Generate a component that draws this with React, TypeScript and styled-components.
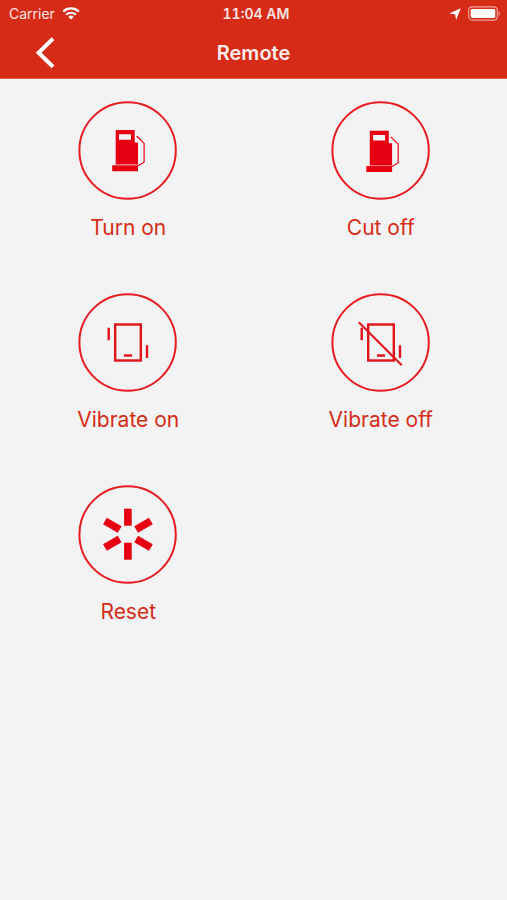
import React from "react";
import styled, { createGlobalStyle } from "styled-components";

const RED = "#d52b17";
const ICON_RED = "#e60012";

const GlobalStyle = createGlobalStyle`
  *, *::before, *::after { box-sizing: border-box; }
  body {
    margin: 0;
    background: #f3f3f3;
    font-family: Inter, "Liberation Sans", sans-serif;
  }
`;

const Screen = styled.div`
  min-height: 100vh;
  background: #f3f3f3;
`;

const Header = styled.header`
  background: ${RED};
  color: #ffffff;
  border-bottom: 1px solid #dc5a4b;
`;

const StatusBar = styled.div`
  display: grid;
  grid-template-columns: 1fr auto 1fr;
  align-items: center;
  height: 27px;
  padding: 0 6px 0 9px;
  font-size: 14px;
  line-height: 20px;
  color: #fbe4e1;
`;

const StatusGroup = styled.div<{ $end?: boolean }>`
  display: flex;
  align-items: center;
  justify-content: ${(p) => (p.$end ? "flex-end" : "flex-start")};
  gap: 7px;
`;

const Time = styled.time`
  padding-left: 2px;
  font-weight: 600;
  font-variant-numeric: tabular-nums;
`;

const NavBar = styled.div`
  display: grid;
  grid-template-columns: 1fr auto 1fr;
  align-items: center;
  height: 51px;
  padding: 0 28px;
`;

const BackButton = styled.button`
  display: flex;
  justify-self: start;
  border: 0;
  padding: 0;
  background: none;
  color: inherit;
  cursor: pointer;
`;

const Title = styled.h1`
  margin: 0;
  font-size: 20px;
  line-height: 28px;
  font-weight: 600;
  color: #fdeeec;
`;

const Actions = styled.main`
  display: grid;
  grid-template-columns: 1fr 1fr;
  row-gap: 50px;
  padding: 22px 0 22px 2px;
`;

const ActionButton = styled.button`
  display: flex;
  flex-direction: column;
  align-items: center;
  justify-self: center;
  gap: 12px;
  border: 0;
  padding: 0;
  background: none;
  color: ${RED};
  font-family: inherit;
  font-size: 21px;
  line-height: 30px;
  cursor: pointer;
`;

const Ring = ({ children }: { children: React.ReactNode }) => (
  <svg width="100" height="100" viewBox="0 0 100 100" fill="none" aria-hidden="true">
    <circle cx="49.6" cy="49.5" r="48.2" stroke="#e81c20" strokeWidth="2" />
    {children}
  </svg>
);

const Pump = () => (
  <>
    <path
      fill={ICON_RED}
      fillRule="evenodd"
      d="M37.7 29h19v12.4H60v22H37.7ZM41 33.3v5.4h12v-5.4ZM34.2 64.2H60v6.1H34.2Z"
    />
    <path d="M37.7 63.8H60" stroke="#f06a70" strokeWidth="1" />
    <path d="M58.7 35l7.4 7.4v18.8L60 64.8" stroke={ICON_RED} strokeWidth="1.2" />
  </>
);

const Phone = () => (
  <g stroke="#e0121a" strokeWidth="2.4">
    <rect x="37.2" y="31.5" width="25.6" height="36" />
    <path d="M46 62.5h8M30.7 34.7v12.6M69 52.3V65" />
  </g>
);

const TurnOnIcon = () => (
  <Ring>
    <Pump />
  </Ring>
);

const CutOffIcon = () => (
  <Ring>
    <g transform="translate(1.1 .8)">
      <Pump />
    </g>
  </Ring>
);

const VibrateOnIcon = () => (
  <Ring>
    <Phone />
  </Ring>
);

const VibrateOffIcon = () => (
  <Ring>
    <Phone />
    <path d="M27.8 29.3l43 43" stroke="#e0121a" strokeWidth="2" />
  </Ring>
);

const ResetIcon = () => (
  <Ring>
    <g fill={ICON_RED}>
      {[0, 60, 120, 180, 240, 300].map((angle) => (
        <rect
          key={angle}
          x="46.1"
          y={angle % 180 === 0 ? 23.7 : 22.7}
          width="7.6"
          height="17"
          transform={`rotate(${angle} 49.9 49.2)`}
        />
      ))}
    </g>
  </Ring>
);

const actions = [
  { label: "Turn on", Icon: TurnOnIcon },
  { label: "Cut off", Icon: CutOffIcon },
  { label: "Vibrate on", Icon: VibrateOnIcon },
  { label: "Vibrate off", Icon: VibrateOffIcon },
  { label: "Reset", Icon: ResetIcon },
];

const WifiIcon = () => (
  <svg width="18" height="13" viewBox="0 0 18 13" fill="none" aria-hidden="true">
    <path d="M1.2 4.6a11.2 11.2 0 0 1 15.6 0" stroke="#fff" strokeWidth="2.3" />
    <path d="M4.1 7.7a7 7 0 0 1 9.8 0" stroke="#fff" strokeWidth="2.1" />
    <path d="M9 12.6L6.3 9.9a3.9 3.9 0 0 1 5.4 0Z" fill="#fff" />
  </svg>
);

const LocationIcon = () => (
  <svg width="12" height="12" viewBox="0 0 12 12" aria-hidden="true">
    <path d="M11.8.2L7.2 11.8 6 6.2 .2 5.4Z" fill="#fff" />
  </svg>
);

const BatteryIcon = () => (
  <svg width="33" height="15" viewBox="0 0 33 15" fill="none" aria-hidden="true">
    <rect x=".7" y=".9" width="28.6" height="13.2" rx="3.4" stroke="#f0a49c" strokeWidth="1.1" />
    <rect x="2.7" y="3" width="24.6" height="9" rx="1.4" fill="#fff" />
    <path d="M30.6 5.2c1.6.6 1.6 4 0 4.6Z" fill="#f0a49c" />
  </svg>
);

export default function App() {
  return (
    <Screen>
      <GlobalStyle />
      <Header>
        <StatusBar>
          <StatusGroup>
            <span>Carrier</span>
            <WifiIcon />
          </StatusGroup>
          <Time>11:04 AM</Time>
          <StatusGroup $end>
            <LocationIcon />
            <BatteryIcon />
          </StatusGroup>
        </StatusBar>
        <NavBar>
          <BackButton type="button" aria-label="Back">
            <svg width="32" height="32" viewBox="0 0 32 32" fill="none" aria-hidden="true">
              <path d="M25 1.6L10.6 15.8 25 29.8" stroke="#fff" strokeWidth="4" />
            </svg>
          </BackButton>
          <Title>Remote</Title>
        </NavBar>
      </Header>
      <Actions>
        {actions.map(({ label, Icon }) => (
          <ActionButton key={label} type="button">
            <Icon />
            {label}
          </ActionButton>
        ))}
      </Actions>
    </Screen>
  );
}
